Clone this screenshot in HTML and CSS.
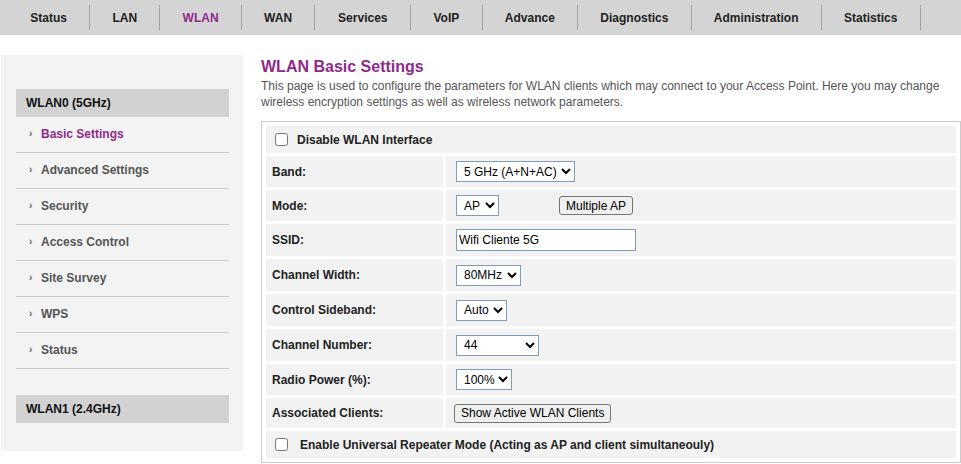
FILE: index.html
```html
<!DOCTYPE html>
<html>
<head>
<meta charset="utf-8">
<title>WLAN Basic Settings</title>
<link rel="stylesheet" href="styles.css">
</head>
<body>
<nav class="topnav">
  <a href="#">Status</a>
  <a href="#">LAN</a>
  <a href="#" class="active">WLAN</a>
  <a href="#">WAN</a>
  <a href="#" class="wide">Services</a>
  <a href="#">VoIP</a>
  <a href="#">Advance</a>
  <a href="#">Diagnostics</a>
  <a href="#">Administration</a>
  <a href="#">Statistics</a>
</nav>
<div class="page">
  <aside class="sidebar">
    <div class="side-head">WLAN0 (5GHz)</div>
    <ul class="side-menu">
      <li class="current"><span class="bullet">›</span>Basic Settings</li>
      <li><span class="bullet">›</span>Advanced Settings</li>
      <li><span class="bullet">›</span>Security</li>
      <li><span class="bullet">›</span>Access Control</li>
      <li><span class="bullet">›</span>Site Survey</li>
      <li><span class="bullet">›</span>WPS</li>
      <li><span class="bullet">›</span>Status</li>
    </ul>
    <div class="side-head second">WLAN1 (2.4GHz)</div>
  </aside>
  <main class="main">
    <h1 class="title">WLAN Basic Settings</h1>
    <p class="desc">This page is used to configure the parameters for WLAN clients which may connect to your Access Point. Here you may change wireless encryption settings as well as wireless network parameters.</p>
    <table class="form">
      <tr class="h27">
        <td colspan="2" class="check-cell"><input type="checkbox" class="chk"><span class="chk-label">Disable WLAN Interface</span></td>
      </tr>
      <tr class="h31">
        <td class="label">Band:</td>
        <td class="value"><select class="sel sel-band"><option>5 GHz (A+N+AC)</option></select></td>
      </tr>
      <tr class="h31">
        <td class="label">Mode:</td>
        <td class="value"><select class="sel sel-mode"><option>AP</option></select><button class="btn btn-multi">Multiple AP</button></td>
      </tr>
      <tr class="h32">
        <td class="label">SSID:</td>
        <td class="value"><input type="text" class="txt" value="Wifi Cliente 5G"></td>
      </tr>
      <tr class="h32">
        <td class="label">Channel Width:</td>
        <td class="value"><select class="sel sel-cw"><option>80MHz</option></select></td>
      </tr>
      <tr class="h32">
        <td class="label">Control Sideband:</td>
        <td class="value"><select class="sel sel-cs"><option>Auto</option></select></td>
      </tr>
      <tr class="h32">
        <td class="label">Channel Number:</td>
        <td class="value"><select class="sel sel-cn"><option>44</option></select></td>
      </tr>
      <tr class="h31">
        <td class="label">Radio Power (%):</td>
        <td class="value"><select class="sel sel-rp"><option>100%</option></select></td>
      </tr>
      <tr class="h30">
        <td class="label">Associated Clients:</td>
        <td class="value"><button class="btn btn-clients">Show Active WLAN Clients</button></td>
      </tr>
      <tr class="h27">
        <td colspan="2" class="check-cell"><input type="checkbox" class="chk"><span class="chk-label wide-gap">Enable Universal Repeater Mode (Acting as AP and client simultaneouly)</span></td>
      </tr>
    </table>
  </main>
</div>
</body>
</html>
```
FILE: styles.css
```css
html, body {
  margin: 0;
  padding: 0;
  background: #ffffff;
  font-family: "Liberation Sans", Arial, sans-serif;
  font-size: 12px;
  color: #222;
}

.topnav {
  display: flex;
  align-items: center;
  height: 35px;
  background: #d4d4d4;
  padding-left: 8px;
}

.topnav a {
  display: block;
  padding: 2px 22.25px 0;
  line-height: 23px;
  border-right: 1px solid #a3a3a3;
  font-weight: bold;
  font-size: 12px;
  color: #222;
  text-decoration: none;
}

.topnav a.wide {
  padding: 2px 22.75px 0;
}

.topnav a.active {
  color: #8e2a8a;
}

.page {
  display: flex;
  align-items: flex-start;
  gap: 18px;
  padding: 20px 0 0 1px;
}

.sidebar {
  width: 242px;
  box-sizing: border-box;
  flex: none;
  background: #f3f3f3;
  padding: 34px 14px 28px 15px;
}

.side-head {
  height: 28px;
  line-height: 28px;
  padding-left: 10px;
  background: #d2d2d2;
  font-weight: bold;
  color: #111;
}

.side-head.second {
  margin-top: 26px;
}

.side-menu {
  list-style: none;
  margin: 0;
  padding: 0;
}

.side-menu li {
  display: flex;
  align-items: center;
  box-sizing: border-box;
  height: 36px;
  border-bottom: 1px solid #cccccc;
  padding: 0 0 2px 13px;
  font-weight: bold;
  color: #555;
}

.side-menu li.current {
  color: #8e2a8a;
}

.bullet {
  display: inline-block;
  width: 12px;
  font-size: 10px;
  color: #666;
}

.main {
  width: 700px;
  flex: none;
}

.title {
  margin: 3px 0 0;
  font-size: 16px;
  line-height: 18px;
  font-weight: bold;
  color: #8e2a8a;
}

.desc {
  margin: 2px 0 11px;
  font-size: 12px;
  line-height: 16px;
  color: #555;
}

.form {
  width: 700px;
  box-sizing: border-box;
  border: 1px solid #cccccc;
  border-spacing: 3px;
  padding: 1px;
}

.form td {
  background: #f2f2f2;
  padding: 0;
  vertical-align: middle;
}

.h27 td { height: 27px; }
.h30 td { height: 30px; }
.h31 td { height: 31px; }
.h32 td { height: 32px; }

.form td.label {
  width: 171px;
  padding-left: 6px;
  font-weight: bold;
  color: #222;
}

.form td.value {
  padding-left: 10px;
}

.check-cell {
  font-weight: bold;
  color: #222;
}

.chk {
  width: 13px;
  height: 13px;
  margin: 0 0 0 9px;
  vertical-align: middle;
}

.chk-label {
  margin-left: 9px;
  vertical-align: middle;
}

.chk-label.wide-gap {
  margin-left: 12px;
}

.sel {
  font-family: "Liberation Sans", Arial, sans-serif;
  font-size: 12px;
  height: 21px;
  box-sizing: border-box;
  border: 1px solid #7f9db9;
  border-radius: 0;
  background-color: #ffffff;
  color: #000;
  padding: 0 0 0 3px;
  margin: 0;
  vertical-align: middle;
}

.sel-band { width: 119px; }
.sel-mode { width: 43px; }
.sel-cw { width: 65px; }
.sel-cs { width: 51px; }
.sel-cn { width: 83px; }
.sel-rp { width: 56px; }

.txt {
  width: 180px;
  height: 22px;
  box-sizing: border-box;
  border: 1px solid #7f9db9;
  padding: 0 2px;
  margin: 0;
  font-family: "Liberation Sans", Arial, sans-serif;
  font-size: 12px;
  color: #000;
  vertical-align: middle;
}

.btn {
  font-family: "Liberation Sans", Arial, sans-serif;
  font-size: 12px;
  height: 19px;
  padding: 0 6px;
  border: 1px solid #767676;
  border-radius: 3px;
  background: #efefef;
  color: #000;
  vertical-align: middle;
}

.btn-multi {
  margin-left: 60px;
}

.btn-clients {
  margin-left: -2px;
  height: 19px;
}
```
